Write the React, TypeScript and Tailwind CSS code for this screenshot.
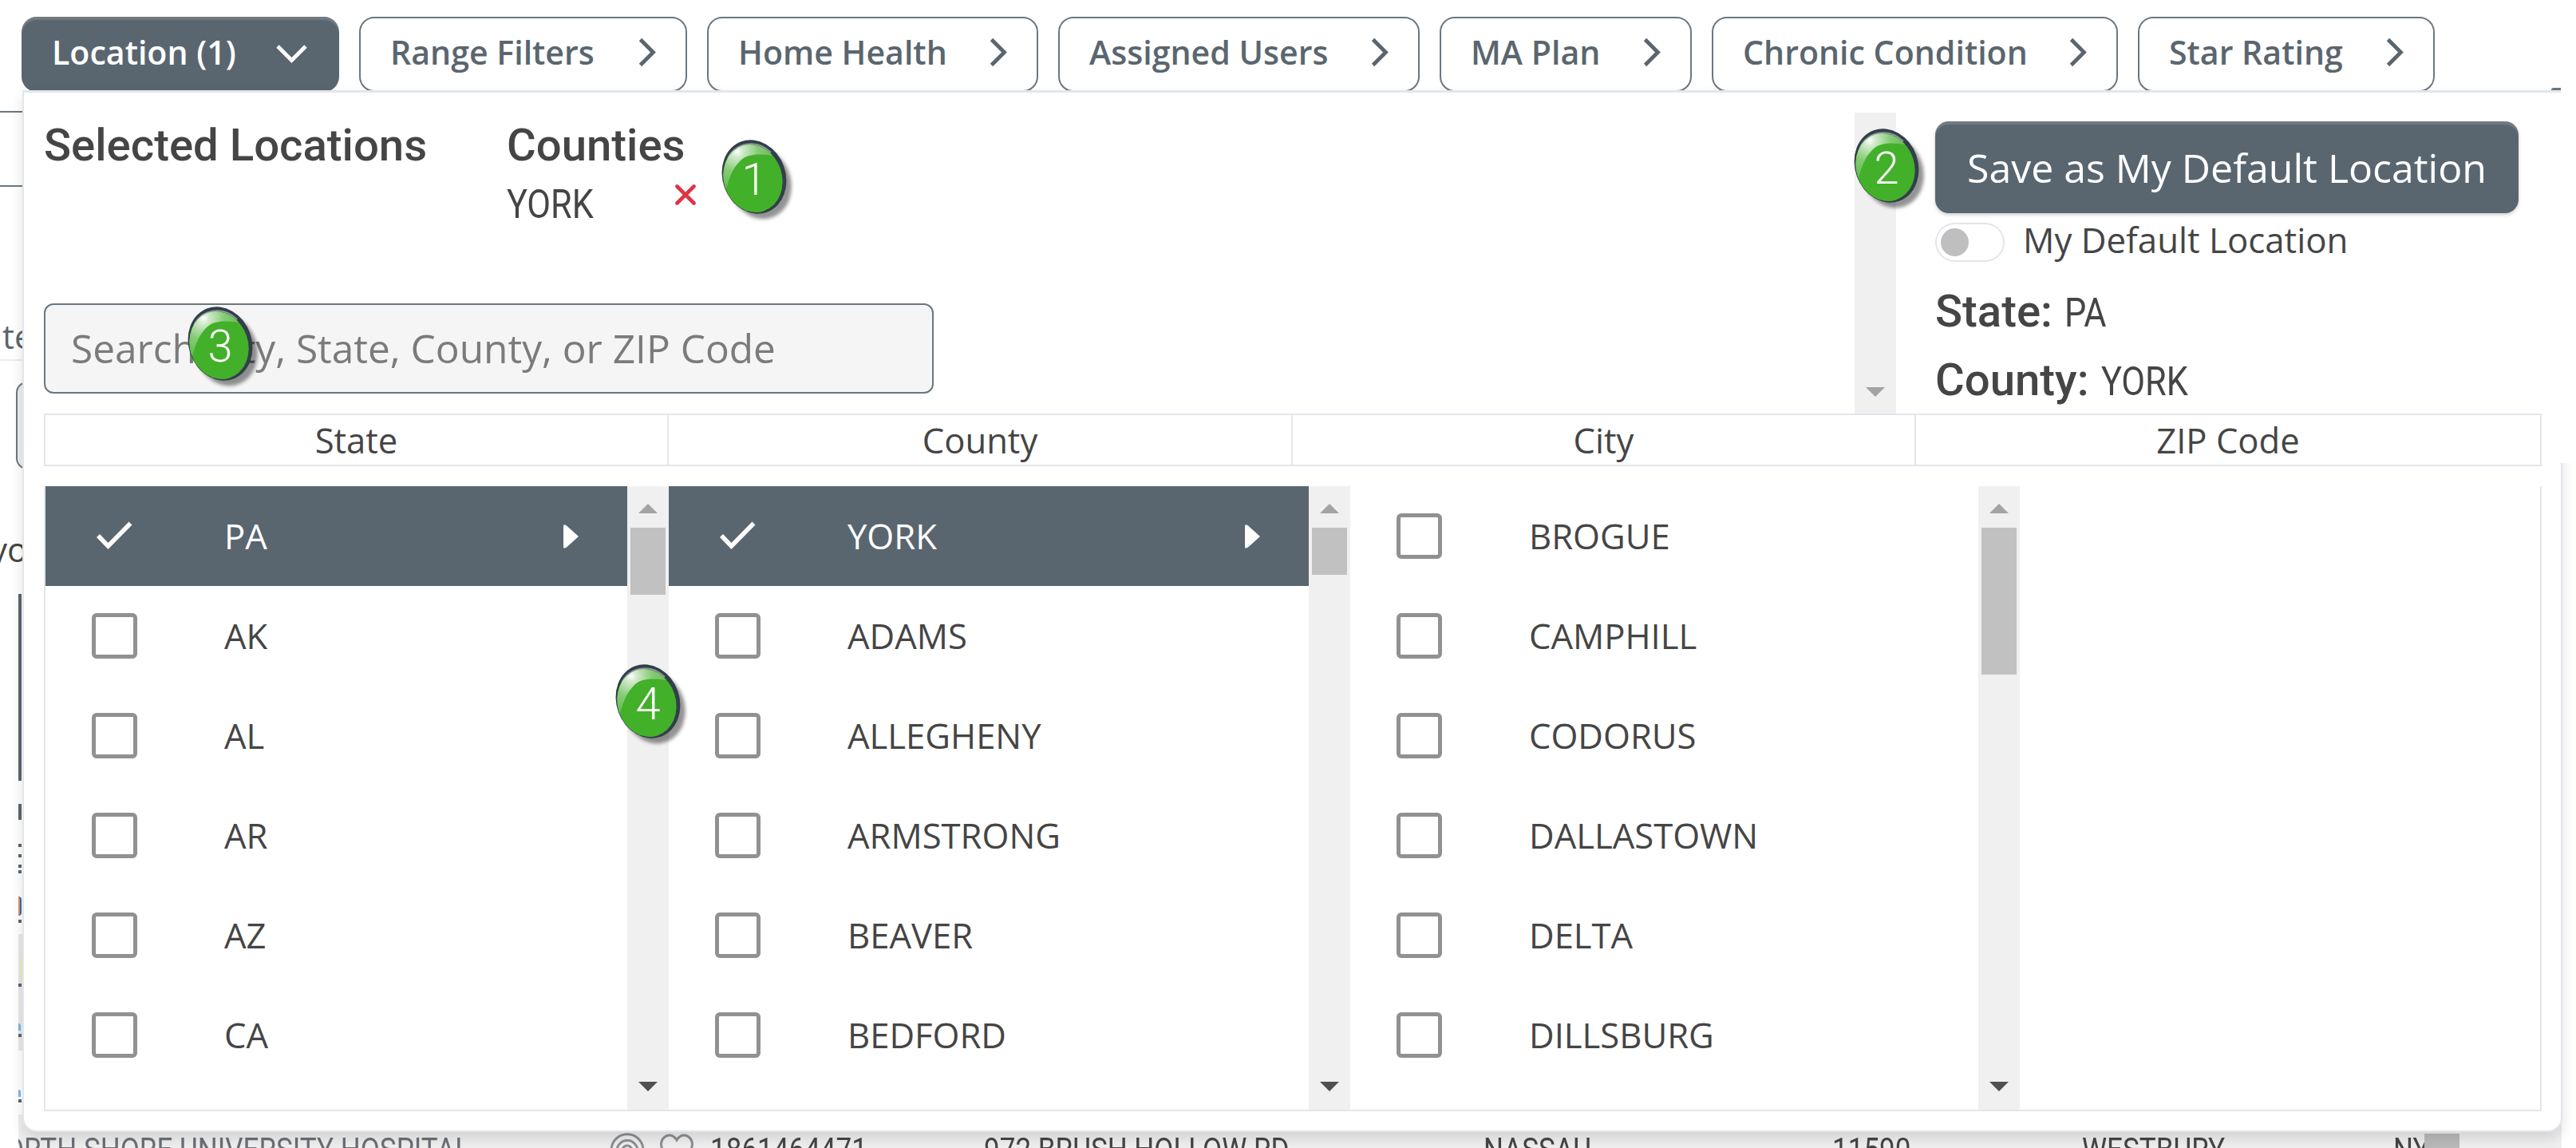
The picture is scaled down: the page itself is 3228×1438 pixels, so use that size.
import React from "react";

const SANS = "font-['Open_Sans',sans-serif]";
const ROBOTO = "font-['Roboto',sans-serif]";

function ChevronRight() {
  return (
    <svg className="block h-[37px] w-[22px] shrink-0" viewBox="0 0 22 37" fill="none">
      <path d="M2.5 2.5 L18.5 18.5 L2.5 34.5" stroke="#5a666f" strokeWidth="4.8" />
    </svg>
  );
}

function ChevronDown() {
  return (
    <svg className="mt-1 block h-[23px] w-[39px] shrink-0" viewBox="0 0 39 23" fill="none">
      <path d="M2 2 L19.5 19.5 L37 2" stroke="#fff" strokeWidth="4.8" />
    </svg>
  );
}

const TABS = [
  { label: "Range Filters", width: "w-[411px]" },
  { label: "Home Health", width: "w-[415px]" },
  { label: "Assigned Users", width: "w-[453px]" },
  { label: "MA Plan", width: "w-[316px]" },
  { label: "Chronic Condition", width: "w-[509px]" },
  { label: "Star Rating", width: "w-[372px]" },
];

function FilterTabs() {
  return (
    <nav className={`relative flex h-[113px] gap-[25px] pt-[21px] pl-[27px] text-[41.1px] leading-none font-semibold ${SANS}`}>
      <button className="flex h-[94px] w-[398px] items-center justify-between rounded-[19px] bg-[#5a666f] pr-[40px] pb-[5px] pl-[38px] whitespace-nowrap text-white shadow-[inset_0_4px_1px_rgba(255,255,255,0.14)]">
        Location (1)
        <ChevronDown />
      </button>
      {TABS.map((t) => (
        <button
          key={t.label}
          className={`flex h-[94px] items-center justify-between rounded-[19px] border-2 border-[#6b7780] bg-white pr-[37px] pb-[5px] pl-[37px] whitespace-nowrap text-[#5a666f] ${t.width}`}
        >
          {t.label}
          <ChevronRight />
        </button>
      ))}
    </nav>
  );
}

function Condensed({ children }: { children: string }) {
  return <span className={`inline-block origin-left scale-x-[0.865] text-[50px] leading-none font-normal ${ROBOTO}`}>{children}</span>;
}

function Badge({ n, place }: { n: number; place: string }) {
  return (
    <div className={`absolute h-[104px] w-[96px] ${place}`}>
      <svg className="absolute inset-0 h-full w-full overflow-visible" viewBox="0 0 96 104">
        <defs>
          <radialGradient id={`shine${n}`} cx="20" cy="15" r="52" gradientUnits="userSpaceOnUse">
            <stop offset="0" stopColor="#fff" />
            <stop offset="0.12" stopColor="#d5ecd0" />
            <stop offset="0.5" stopColor="#86cb76" />
            <stop offset="1" stopColor="#5bba48" />
          </radialGradient>
          <filter id={`soft${n}`} x="-20%" y="-20%" width="140%" height="140%">
            <feGaussianBlur stdDeviation="2" />
          </filter>
          <clipPath id={`face${n}`}>
            <ellipse cx="39.5" cy="48.5" rx="36.5" ry="43" transform="rotate(-18 39.5 48.5)" />
          </clipPath>
        </defs>
        <ellipse cx="48" cy="54" rx="39" ry="46" transform="rotate(-20 48 54)" fill="#000" opacity="0.42" filter={`url(#soft${n})`} />
        <ellipse cx="41" cy="46.5" rx="39.5" ry="47" transform="rotate(-20 41 46.5)" fill="#323f4a" />
        <path d="M8 24 C16 4 44 -2 62 16" fill="none" stroke="#8f949c" strokeWidth="2" />
        <g clipPath={`url(#face${n})`}>
          <rect width="96" height="104" fill="#43b02a" />
          <path d="M-5 -5 H96 V26 C60 18 36 14 24 26 C13 37 10 48 6 62 L-5 60 Z" fill={`url(#shine${n})`} />
        </g>
      </svg>
      <span className={`absolute top-[22px] left-0 w-[82px] text-center text-[56px] leading-[56px] font-light text-white ${ROBOTO}`}>{n}</span>
    </div>
  );
}

function Scrollbar({ thumb }: { thumb: string }) {
  return (
    <div className="flex h-full w-[52px] shrink-0 flex-col items-center bg-[#f0f0f0] pt-[22px] pb-[23px]">
      <svg className="block h-[12px] w-[24px]" viewBox="0 0 24 12"><path d="M0 12 L12 0 L24 12 Z" fill="#a3a3a3" /></svg>
      <div className={`mt-[18px] w-[44px] bg-[#c1c1c1] ${thumb}`} />
      <svg className="mt-auto block h-[12px] w-[24px]" viewBox="0 0 24 12"><path d="M0 0 H24 L12 12 Z" fill="#505050" /></svg>
    </div>
  );
}

function Item({ label, selected }: { label: string; selected?: boolean }) {
  return (
    <li className={`flex h-[125px] items-center pr-[61px] pl-[58px] ${selected ? "bg-[#5a666f] text-white" : "text-[#454545]"}`}>
      {selected ? (
        <svg className="block h-[57px] w-[57px]" viewBox="0 0 57 57" fill="none">
          <path d="M8 28 L20.5 41 L48.5 12.5" stroke="#fff" strokeWidth="5.5" />
        </svg>
      ) : (
        <span className="h-[57px] w-[57px] rounded-[6px] border-[5px] border-[#919191]" />
      )}
      <span className="ml-[109px] leading-none">{label}</span>
      {selected && (
        <svg className="ml-auto block h-[30px] w-[19px]" viewBox="0 0 19 30">
          <path d="M0 2 Q0 -1 4 1.500 L19 15 L4 28.500 Q0 31 0 28 Z" fill="#fff" />
        </svg>
      )}
    </li>
  );
}

const COLUMNS = [
  { items: ["PA", "AK", "AL", "AR", "AZ", "CA"], selected: true, width: "w-[729px]", thumb: "h-[84px]" },
  { items: ["YORK", "ADAMS", "ALLEGHENY", "ARMSTRONG", "BEAVER", "BEDFORD"], selected: true, width: "w-[802px]", thumb: "h-[59px]" },
  { items: ["BROGUE", "CAMPHILL", "CODORUS", "DALLASTOWN", "DELTA", "DILLSBURG"], selected: false, width: "w-[787px]", thumb: "h-[184px]" },
];

function LocationTable() {
  return (
    <div className={`text-[43.6px] text-[#454545] ${SANS}`}>
      <div className="grid h-[66px] w-[3130px] grid-cols-[781px_782px_781px_782px] border-2 border-[#e2e6ec] leading-[62px]">
        {["State", "County", "City", "ZIP Code"].map((h, i) => (
          <div key={h} className={`text-center ${i < 3 ? "border-r-2 border-[#e2e6ec]" : ""}`}>{h}</div>
        ))}
      </div>
      <div className="mt-[25px] flex h-[783px] w-[3130px] border-x-2 border-b-2 border-[#e2e6ec]">
        {COLUMNS.map((c) => (
          <React.Fragment key={c.items[0]}>
            <ul className={`shrink-0 ${c.width}`}>
              {c.items.map((it, i) => (
                <Item key={it} label={it} selected={c.selected && i === 0} />
              ))}
            </ul>
            <Scrollbar thumb={c.thumb} />
          </React.Fragment>
        ))}
      </div>
    </div>
  );
}

function Selection() {
  return (
    <div className={`flex h-[402px] text-[#454545] ${SANS}`}>
      <div className="flex w-[2269px] shrink-0 flex-col">
        <div className={`flex pt-[36px] ${ROBOTO}`}>
          <h2 className="w-[580px] text-[56.3px] leading-[60px] font-medium">Selected Locations</h2>
          <div>
            <h2 className="text-[56.3px] leading-[60px] font-medium">Counties</h2>
            <div className="mt-[19px] flex h-[50px]">
              <div className="w-[211px]"><Condensed>YORK</Condensed></div>
              <svg className="block h-[26px] w-[26px]" viewBox="0 0 26 26">
                <path d="M2.500 2.500 L23.500 23.500 M23.500 2.500 L2.500 23.500" stroke="#dc3545" strokeWidth="4.6" strokeLinecap="round" />
              </svg>
            </div>
          </div>
        </div>
        <div className="mt-auto mb-[25px] flex h-[113px] w-[1115px] items-center rounded-[12px] border-2 border-[#6b7780] bg-[#f5f5f5] pl-[32px] text-[49.6px] whitespace-nowrap text-[#7b7b7b]">
          Search City, State, County, or ZIP Code
        </div>
      </div>
      <div className="mt-[25px] flex w-[52px] shrink-0 flex-col items-center bg-[#f0f0f0]">
        <svg className="mt-auto mb-[21px] block h-[12px] w-[24px]" viewBox="0 0 24 12"><path d="M0 0 H24 L12 12 Z" fill="#a3a3a3" /></svg>
      </div>
      <div className="pt-[36px] pl-[49px]">
        <button className="block h-[115px] w-[731px] rounded-[17px] bg-[#5a666f] text-center text-[50px] leading-[112px] whitespace-nowrap text-white shadow-[inset_0_4px_1px_rgba(255,255,255,0.14),0_2px_4px_rgba(0,0,0,0.2)]">
          Save as My Default Location
        </button>
        <div className="mt-[12px] flex h-[49px] items-center text-[43.8px] leading-[49px]">
          <span className="mr-[23px] flex h-[49px] w-[87px] items-center rounded-full border-2 border-[#e2e6ec] pl-[5px]">
            <span className="h-[35px] w-[35px] rounded-full bg-[#bfbfbf]" />
          </span>
          <span className="-mt-[6px]">My Default Location</span>
        </div>
        <div className={`mt-[34px] flex h-[56px] items-baseline gap-[15px] text-[56.3px] leading-[56px] font-medium ${ROBOTO}`}>
          State: <Condensed>PA</Condensed>
        </div>
        <div className={`mt-[30px] flex h-[56px] items-baseline gap-[15px] text-[56.3px] leading-[56px] font-medium ${ROBOTO}`}>
          County: <Condensed>YORK</Condensed>
        </div>
      </div>
    </div>
  );
}

const RESULT_CELLS = [
  { text: "NORTH SHORE UNIVERSITY HOSPITAL", place: "left-[-19px]", tone: "text-[#6b7076]" },
  { text: "1861464471", place: "left-[890px]", tone: "text-[#454545]" },
  { text: "972 BRUSH HOLLOW RD", place: "left-[1233px]", tone: "text-[#454545]" },
  { text: "NASSAU", place: "left-[1859px]", tone: "text-[#454545]" },
  { text: "11590", place: "left-[2296px]", tone: "text-[#454545]" },
  { text: "WESTBURY", place: "left-[2609px]", tone: "text-[#454545]" },
  { text: "NY", place: "left-[2999px]", tone: "text-[#454545]" },
];

const MARKS = [
  "top-[744px] h-[234px]",
  "top-[1007px] h-[20px]",
  "top-[1057px] h-[4px]",
  "top-[1070px] h-[4px]",
  "top-[1083px] h-[4px]",
  "top-[1090px] h-[4px]",
  "top-[1152px] h-[4px]",
  "top-[1232px] h-[4px]",
  "top-[1295px] h-[4px]",
  "top-[1377px] h-[4px]",
];

/* The results page that the dropdown panel covers; only its edges stay visible. */
function ResultsBehind() {
  return (
    <div className={`absolute inset-0 overflow-hidden text-[#454545] ${SANS}`}>
      <div className="absolute top-[139px] left-0 h-[95px] w-[60px] border-y-2 border-[#6b7780]" />
      <div className="absolute top-[110px] left-[3197px] h-[3px] w-[12px] rounded-tl-full bg-[#6b7780]" />
      <span className="absolute top-[393px] left-[3px] text-[42px] leading-[56px] text-[#5a666f]">te</span>
      <div className="absolute top-[450px] left-0 h-[2px] w-[60px] bg-[#ececec]" />
      <div className="absolute top-[478px] left-[20px] h-[110px] w-[60px] rounded-[14px] border-2 border-[#6b7780] bg-[#eeeeee]" />
      <span className="absolute top-[660px] left-[-12px] text-[42px] leading-[56px]">yo</span>
      <div className="absolute top-[1170px] left-[23px] h-[146px] w-[20px] bg-[#e9e9e9]" />
      <div className="absolute top-[1200px] left-[25px] h-[30px] w-[3px] bg-[#ecebc4]" />
      <div className="absolute top-[1123px] left-[23px] h-[24px] w-[4px] rounded-r-full border-r-2 border-[#3f6ea5] bg-[#d9935f]" />
      <div className="absolute top-[1282px] left-[23px] h-[9px] w-[3px] rounded-tr-full bg-[#7fb4e2]" />
      <div className="absolute top-[1365px] left-[23px] h-[9px] w-[3px] rounded-tr-full bg-[#7fb4e2]" />
      {MARKS.map((m) => (
        <div key={m} className={`absolute left-[23px] w-[4px] bg-[#5a666f] ${m}`} />
      ))}
      <div className="absolute top-[1396px] left-[23px] h-[42px] w-[3187px] overflow-hidden bg-[#efefef]">
        <div className="absolute top-[28px] -left-[23px] h-[40px] w-full">
          {RESULT_CELLS.map((c) => (
            <span key={c.text} className={`absolute top-0 origin-left scale-x-[0.865] text-[40.5px] leading-[33px] whitespace-nowrap ${ROBOTO} ${c.place} ${c.tone}`}>
              {c.text}
            </span>
          ))}
          <svg className="absolute -top-[5px] left-[764px] h-[44px] w-[110px]" viewBox="0 0 110 44" fill="none" stroke="#8b8f93" strokeWidth="3">
            <path d="M8 36 A20 20 0 1 1 36 36" />
            <path d="M13 32 A13 13 0 1 1 31 32" />
            <circle cx="22" cy="22" r="6" />
            <path d="M84 40 L67 22 C58 8 76 -5 84 9 C92 -5 110 8 101 22 Z" />
          </svg>
          <div className="absolute -top-[4px] left-[3038px] h-[40px] w-[44px] bg-[#bababa]" />
        </div>
      </div>
    </div>
  );
}

export default function App() {
  return (
    <main className="relative h-[1438px] w-[3228px] overflow-hidden bg-white">
      <ResultsBehind />
      <FilterTabs />
      <section className="relative ml-[28px] h-[1305px] w-[3183px] rounded-b-[18px] border-2 border-t-[3px] border-[#e2e6ec] bg-white pl-[25px] shadow-[0_8px_16px_rgba(0,0,0,0.12)]">
        <div className="absolute -top-[3px] -right-[19px] h-[467px] w-[19px] bg-white" />
        <Selection />
        <LocationTable />
      </section>
      <Badge n={1} place="top-[175px] left-[904px]" />
      <Badge n={2} place="top-[161px] left-[2323px]" />
      <Badge n={3} place="top-[384px] left-[235px]" />
      <Badge n={4} place="top-[832px] left-[771px]" />
    </main>
  );
}
